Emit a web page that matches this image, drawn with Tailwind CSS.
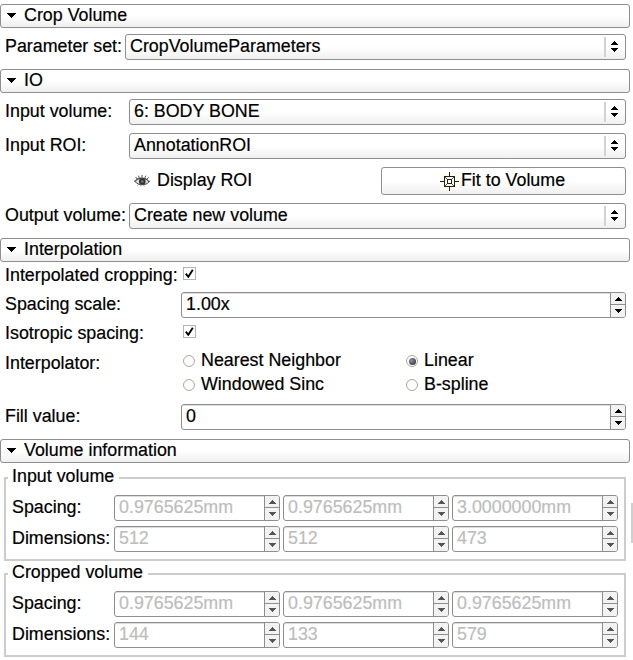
<!DOCTYPE html>
<html lang="en">
<head>
<meta charset="utf-8">
<title>Crop Volume</title>
<script src="https://cdn.jsdelivr.net/npm/@tailwindcss/browser@4"></script>
</head>
<body class="bg-white">
<svg class="hidden">
  <symbol id="up" viewBox="0 0 7 4"><path d="M3 0h1v1h1v1h1v1h1v1H0V3h1V2h1V1h1z" fill="currentColor"/></symbol>
  <symbol id="down" viewBox="0 0 7 4"><path d="M3 4h1V3h1V2h1V1h1V0H0v1h1v1h1v1h1z" fill="currentColor"/></symbol>
  <symbol id="tick" viewBox="0 0 9 9"><path d="M.8 4.6 3.3 7.8 7.8.8" fill="none" stroke="#000" stroke-width="1.9"/></symbol>
</svg>
<main id="panel" class="relative w-[633px] h-[660px] overflow-hidden bg-white pt-1 flex flex-col text-[17.85px] leading-5 text-black whitespace-nowrap font-['Liberation_Sans',Arial,sans-serif] [-webkit-text-stroke:0.2px_currentColor]"></main>

<script>
const icon = (id, cls) => `<svg class="${cls}"><use href="#${id}"/></svg>`;

const header = (title, margin) => `
  <h2 class="${margin} w-[630px] h-6 shrink-0 border border-[#8e8e8e] rounded-[3px] bg-linear-to-b from-white from-50% to-[#efefef] flex items-center pl-[6px] pb-[2px]">
    <svg class="w-[9px] h-[5px] mr-2" viewBox="0 0 9 5"><path d="M0 0h9v1H8v1H7v1H6v1H5v1H4V4H3V3H2V2H1V1H0z"/></svg><span>${title}</span>
  </h2>`;

const combo = text => `
  <div class="flex-1 h-[26px] border border-[#8e8e8e] rounded-[3px] bg-linear-to-b from-white from-50% to-[#f0f0f0] flex items-center pl-1">
    <span class="flex-1 pb-[2px]">${text}</span>
    <i class="w-[2px] h-5 bg-[#d2d2d2] mr-[5px]"></i>
    <span class="w-[7px] mr-[7px] mb-[2px] flex flex-col gap-[3px]">${icon('up', 'w-[7px] h-1')}${icon('down', 'w-[7px] h-1')}</span>
  </div>`;

const spin = (text, disabled) => `
  <div class="flex-1 h-[26px] border border-[#8e8e8e] rounded-[3px] flex overflow-hidden shadow-[inset_0_1px_0_#dedede] ${disabled ? 'text-[#bdbdbd]' : 'text-black'}">
    <span class="flex-1 pl-1 pt-px">${text}</span>
    <span class="w-[15px] border-l border-[#8e8e8e] flex flex-col bg-[#f2f2f2] ${disabled ? 'text-[#555]' : 'text-black'}">
      <span class="h-3 border-b border-[#8e8e8e] flex items-center justify-center">${icon('up', 'w-[7px] h-1')}</span>
      <span class="h-3 flex items-center justify-center">${icon('down', 'w-[7px] h-1')}</span>
    </span>
  </div>`;

const row = (label, labelWidth, control, box, labelPad = 'pb-[3px]') => `
  <div class="${box} flex items-center pl-[5px] pr-[7px] shrink-0"><span class="${labelWidth} ${labelPad} shrink-0">${label}</span>${control}</div>`;

const check = `<span class="ml-[2px] size-[13px] border border-[#b4b4b4] bg-white flex items-center justify-center">${icon('tick', 'size-[9px]')}</span>`;

const radio = (label, on) => `
  <span class="flex items-center h-6"><i class="size-3 rounded-full border border-[#b0a8a2] bg-[#fcfcfa] mt-[2px] mr-[6px] flex items-center justify-center">${on ? '<b class="size-[7px] rounded-full bg-radial-[at_35%_35%] from-[#8794a0] to-[#18202a]"></b>' : ''}</i>${label}</span>`;

const group = (title, spacing, dims, margin) => `
  <fieldset class="${margin} relative ml-1 w-[622px] h-[84px] shrink-0 border-2 border-[#cccccc] pt-4 pl-[6px] pr-[6px]">
    <span class="absolute -top-[13px] left-[2px] bg-white pl-1 pr-[5px]">${title}</span>
    ${[['Spacing:', spacing], ['Dimensions:', dims]].map(([name, values]) => `
    <div class="flex items-center gap-[3px] mb-[5px]"><span class="w-[99px] shrink-0 pb-[3px]">${name}</span>${values.map(v => spin(v, true)).join('')}</div>`).join('')}
  </fieldset>`;

document.getElementById('panel').innerHTML =
  header('Crop Volume', '') +
  row('Parameter set:', 'w-[120px]', combo('CropVolumeParameters'), 'mt-[6px] h-[26px]') +
  header('IO', 'mt-[9px]') +
  row('Input volume:', 'w-[124px]', combo('6: BODY BONE'), 'mt-[6px] h-[26px]') +
  row('Input ROI:', 'w-[124px]', combo('AnnotationROI'), 'mt-2 h-[26px]') +
  `<div class="mt-2 h-7 flex items-center shrink-0 pl-[134px] pr-[7px]">
    <svg class="w-4 h-3 mr-[7px] mb-px" viewBox="0 0 16 12" fill="none">
      <path d="M1 6.5C3.5 2.5 12 2 15 6.8 12 10.8 4.5 11 1 6.5Z" fill="#ddd" stroke="#444" stroke-width="1"/>
      <path d="M1.5 5.3C4.5 2.2 11.5 2.2 14.5 5.7M3.4 4.2 1.7 2M5.3 3 4.4.7M8 2.5V0M10.8 3l1-2.3M12.8 4.2l1.8-1.9M0 6h2M14 6.4h2" stroke="#444" stroke-width=".9"/>
      <circle cx="8.3" cy="6.5" r="3.3" fill="#333"/><circle cx="8.3" cy="6.5" r="1.3" fill="#777"/>
      <path d="M4 9.8 3.3 11M6.5 10.5l-.3 1.2M10 10.5l.3 1.2" stroke="#999" stroke-width=".8"/>
    </svg>
    <span class="w-[224px] pb-[3px]">Display ROI</span>
    <button class="flex-1 h-7 border border-[#8e8e8e] rounded-[3px] bg-linear-to-b from-white from-50% to-[#f0f0f0] flex items-center justify-center pb-[2px] pr-[2px]">
      <svg class="w-[19px] h-[19px] mr-[2px] mt-[3px]" viewBox="0 0 19 19" fill="none" stroke="#222" shape-rendering="crispEdges">
        <path d="M1 1h17v17H1z" fill="#fdfcee" stroke="none"/>
        <path d="M4.5 4.5h10v10h-10zM7.5 7.5h4v4h-4zM9.5 0v4M9.5 15v4M0 9.5h4M15 9.5h4"/>
        <path d="m5 5 2 2M14 5l-2 2M5 14l2-2M14 14l-2-2" stroke="#555" shape-rendering="auto"/>
      </svg>Fit to Volume</button>
  </div>` +
  row('Output volume:', 'w-[124px]', combo('Create new volume'), 'mt-2 h-[26px]') +
  header('Interpolation', 'mt-[9px]') +
  row('Interpolated cropping:', 'w-[176px]', check, 'mt-[2px] h-[19px]', 'pt-[3px]') +
  row('Spacing scale:', 'w-[176px]', spin('1.00x'), 'mt-[9px] h-[26px]') +
  row('Isotropic spacing:', 'w-[176px]', check, 'mt-1 h-[19px]', 'pt-[3px]') +
  row('Interpolator:', 'w-[178px]', `
    <div class="grid grid-cols-[223px_1fr]">${radio('Nearest Neighbor')}${radio('Linear', true)}${radio('Windowed Sinc')}${radio('B-spline')}</div>`, 'mt-[7px] h-12 [&>span]:-mt-5', 'pt-px') +
  row('Fill value:', 'w-[176px]', spin('0'), 'mt-[8px] h-[26px]') +
  header('Volume information', 'mt-[9px]') +
  group('Input volume', ['0.9765625mm', '0.9765625mm', '3.0000000mm'], ['512', '512', '473'], 'mt-[14px]') +
  group('Cropped volume', ['0.9765625mm', '0.9765625mm', '0.9765625mm'], ['144', '133', '579'], 'mt-3') +
  '<i class="absolute right-0 top-[503px] w-[2px] h-10 bg-[#cfcfcf]"></i>';
</script>
</body>
</html>
